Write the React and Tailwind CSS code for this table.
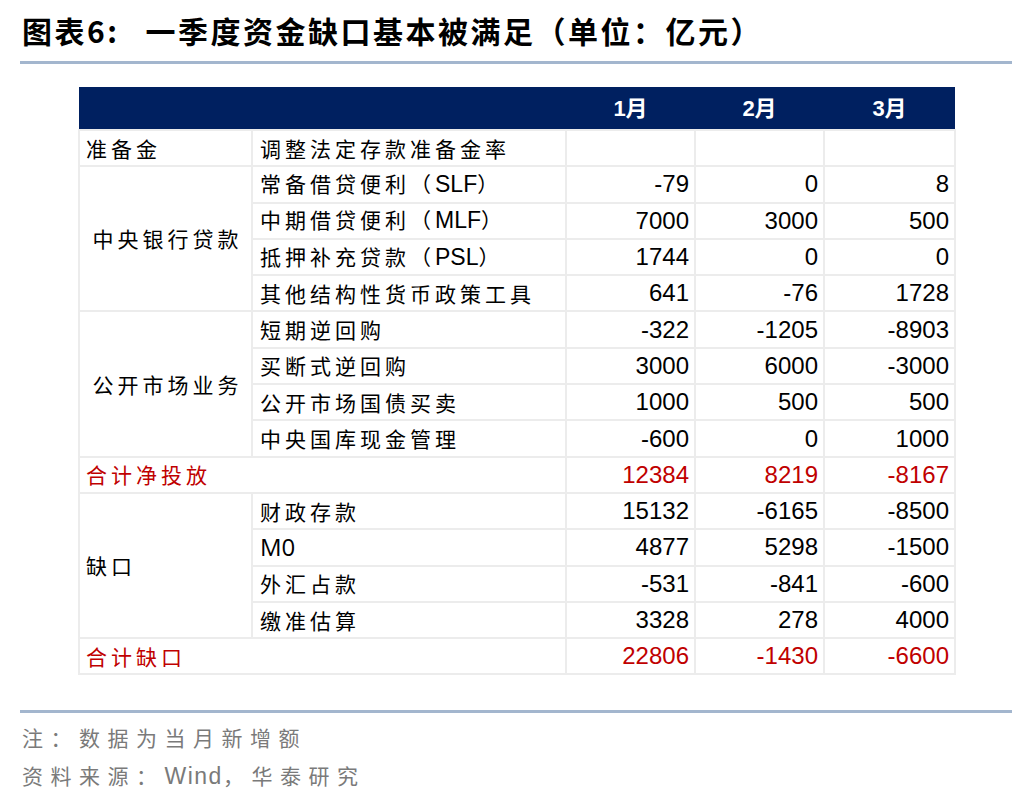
import React from "react";

const CJK = { fontFamily: '"Noto Sans CJK SC", "Noto Sans", sans-serif' };

const rows = [
  { g: "准备金", gAlign: "left", span: 1, label: "调整法定存款准备金率", v: ["", "", ""] },
  { g: "中央银行贷款", gAlign: "center", span: 4, label: "常备借贷便利（SLF）", v: ["-79", "0", "8"] },
  { label: "中期借贷便利（MLF）", v: ["7000", "3000", "500"] },
  { label: "抵押补充贷款（PSL）", v: ["1744", "0", "0"] },
  { label: "其他结构性货币政策工具", v: ["641", "-76", "1728"] },
  { g: "公开市场业务", gAlign: "center", span: 4, label: "短期逆回购", v: ["-322", "-1205", "-8903"] },
  { label: "买断式逆回购", v: ["3000", "6000", "-3000"] },
  { label: "公开市场国债买卖", v: ["1000", "500", "500"] },
  { label: "中央国库现金管理", v: ["-600", "0", "1000"] },
  { total: "合计净投放", v: ["12384", "8219", "-8167"] },
  { g: "缺口", gAlign: "left", span: 4, label: "财政存款", v: ["15132", "-6165", "-8500"] },
  { label: "M0", latin: true, v: ["4877", "5298", "-1500"] },
  { label: "外汇占款", v: ["-531", "-841", "-600"] },
  { label: "缴准估算", v: ["3328", "278", "4000"] },
  { total: "合计缺口", v: ["22806", "-1430", "-6600"] },
];

const cell = "border-2 border-[#ececec]";

export default function App() {
  return (
    <div className="w-[1032px] h-[800px] bg-white overflow-hidden">
      <div
        className="pl-[22px] pt-[12px] text-[30px] leading-[36px] font-bold text-black tracking-[2.5px] whitespace-nowrap"
        style={CJK}
      >
        图表6:<span className="inline-block w-[26px]"></span>一季度资金缺口基本被满足（单位：亿元）
      </div>
      <div className="mx-[20px] mt-[13px] h-[3px] bg-[#a3b6ce]"></div>

      <div className="ml-[78px] mt-[23px] w-[876px]">
        <table className="w-[876px] border-collapse table-fixed">
          <colgroup>
            <col className="w-[173px]" />
            <col className="w-[314px]" />
            <col className="w-[129px]" />
            <col className="w-[129px]" />
            <col className="w-[131px]" />
          </colgroup>
          <thead>
            <tr className="h-[43px] bg-[#002060]">
              <th colSpan={2}></th>
              {["1月", "2月", "3月"].map((m) => (
                <th
                  key={m}
                  className="text-white text-[22px] font-bold text-center"
                  style={{ fontFamily: '"Liberation Sans", "Noto Sans CJK SC", sans-serif' }}
                >
                  {m}
                </th>
              ))}
            </tr>
          </thead>
          <tbody>
            {rows.map((r, i) => (
              <tr key={i} className="h-[36.3px]">
                {r.total ? (
                  <td
                    colSpan={2}
                    className={`${cell} pl-[6px] text-[21px] tracking-[4px] text-[#c00000] leading-none`}
                    style={CJK}
                  >
                    {r.total}
                  </td>
                ) : (
                  <>
                    {r.g && (
                      <td
                        rowSpan={r.span}
                        className={`${cell} text-[21px] tracking-[4px] text-black leading-none ${
                          r.gAlign === "center" ? "text-center pl-[4px]" : "pl-[6px]"
                        }`}
                        style={CJK}
                      >
                        {r.g}
                      </td>
                    )}
                    <td
                      className={`${cell} pl-[7px] text-black leading-none ${
                        r.latin ? "text-[24px]" : "text-[21px] tracking-[4px]"
                      }`}
                      style={
                        r.latin
                          ? { fontFamily: '"Open Sans", "Liberation Sans", sans-serif' }
                          : CJK
                      }
                    >
                      {r.label.split(/([A-Z]+)/).map((part, k) =>
                        /^[A-Z]+$/.test(part) && !r.latin ? (
                          <span
                            key={k}
                            className="tracking-[0px] text-[23px]"
                            style={{ fontFamily: '"Liberation Sans", sans-serif' }}
                          >
                            {part}
                          </span>
                        ) : (
                          <React.Fragment key={k}>{part}</React.Fragment>
                        )
                      )}
                    </td>
                  </>
                )}
                {r.v.map((v, k) => (
                  <td
                    key={k}
                    className={`${cell} text-right pr-[5px] text-[24px] leading-none ${
                      r.total ? "text-[#c00000]" : "text-black"
                    }`}
                    style={{ fontFamily: '"Liberation Sans", Arial, sans-serif' }}
                  >
                    {v}
                  </td>
                ))}
              </tr>
            ))}
          </tbody>
        </table>
      </div>

      <div className="mx-[20px] mt-[35px] h-[3px] bg-[#a3b6ce]"></div>
      <div className="pl-[22px] mt-[5px] text-[21px] leading-[38px] text-[#7a7a7a] tracking-[7.5px]" style={CJK}>
        <div>注：数据为当月新增额</div>
        <div>
          资料来源：<span className="tracking-[1.5px] text-[23px]" style={{ fontFamily: '"Liberation Sans", sans-serif' }}>Wind</span>，华泰研究
        </div>
      </div>
    </div>
  );
}
